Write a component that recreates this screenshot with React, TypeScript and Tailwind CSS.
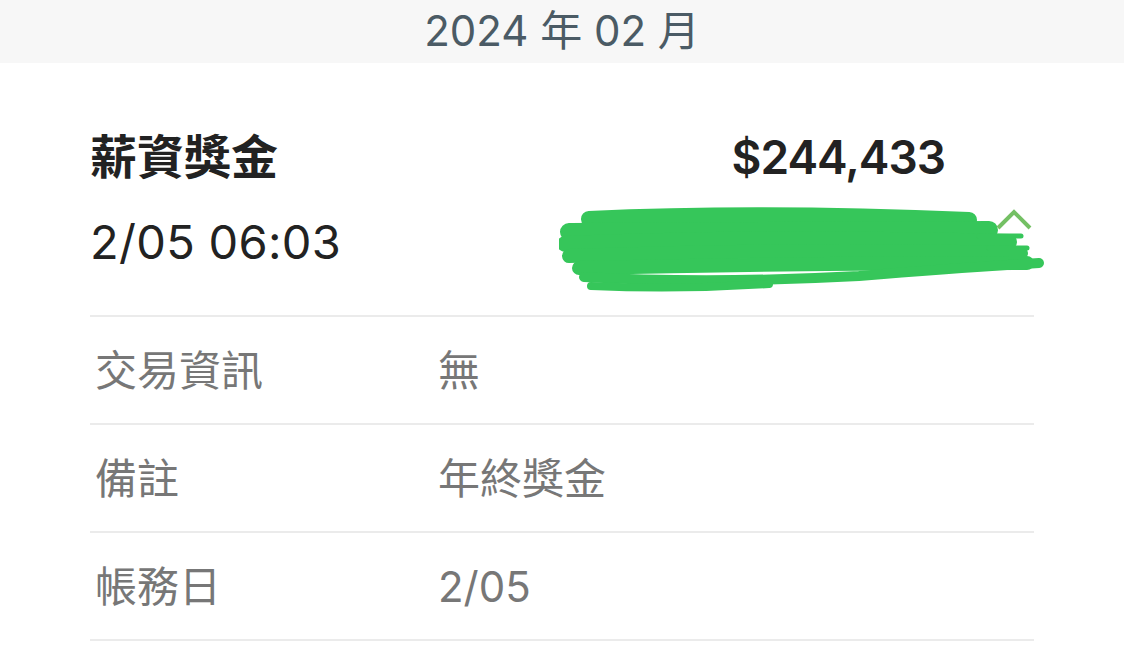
const font = "font-['Inter','Noto_Sans_CJK_TC',sans-serif]";

const rows = [
  { label: "交易資訊", value: "無" },
  { label: "備註", value: "年終獎金" },
  { label: "帳務日", value: "2/05" },
];

const Scribble = () => (
  <svg
    className="absolute left-[-437px] top-[-8px]"
    width="490"
    height="90"
    viewBox="0 0 490 90"
    fill="none"
    stroke="#36c65a"
    strokeLinecap="round"
    strokeLinejoin="round"
  >
    <path d="M30 13 Q200 5 410 14" strokeWidth="16" />
    <path d="M10 26 L430 24" strokeWidth="18" />
    <path d="M6 38 Q220 30 450 36" strokeWidth="16" />
    <path d="M10 50 Q230 42 462 47" strokeWidth="14" />
    <path d="M20 62 Q250 57 468 57" strokeWidth="14" />
    <path d="M25 71 Q150 78 300 70 Q400 62 480 57" strokeWidth="10" />
    <path d="M32 80 Q120 84 210 78" strokeWidth="8" />
    <path d="M420 30 L462 30" strokeWidth="5" />
    <path d="M430 42 L468 42" strokeWidth="5" />
  </svg>
);

export default function App() {
  return (
    <div className={`min-h-[645px] bg-white ${font}`}>
      <div className="flex h-[63px] items-center justify-center bg-[#f7f7f7] pb-[2px] text-[42px] text-[#4b5b65]">
        2024 年 02 月
      </div>

      <div className="mx-[90px]">
        <div className="flex justify-between pt-[66px] pb-[45px]">
          <div className="flex flex-col gap-[29px]">
            <div className="text-[47px] font-bold leading-[56px] text-[#222]">薪資獎金</div>
            <div className="text-[47px] tracking-[0.3px] leading-[56px] text-[#222]">2/05 06:03</div>
          </div>
          <div className="flex flex-col items-end gap-[29px]">
            <div className="pr-[89px] text-[46px] font-semibold tracking-[-1px] leading-[56px] text-[#222]">
              $244,433
            </div>
            <div className="relative flex h-[56px] items-start pr-[2px]">
              <Scribble />
              <svg width="36" height="24" viewBox="0 0 36 24" fill="none" className="relative mt-[-7px]">
                <path d="M2 21 L18 5 L34 21" stroke="#74c064" strokeWidth="4" />
              </svg>
            </div>
          </div>
        </div>

        {rows.map((row) => (
          <div
            key={row.label}
            className="flex h-[108px] items-center border-t-2 border-[#ebebeb] text-[42px] text-[#777]"
          >
            <div className="w-[348px] pl-[5px]">{row.label}</div>
            <div>{row.value}</div>
          </div>
        ))}
        <div className="border-t-2 border-[#ebebeb]" />
      </div>
    </div>
  );
}
